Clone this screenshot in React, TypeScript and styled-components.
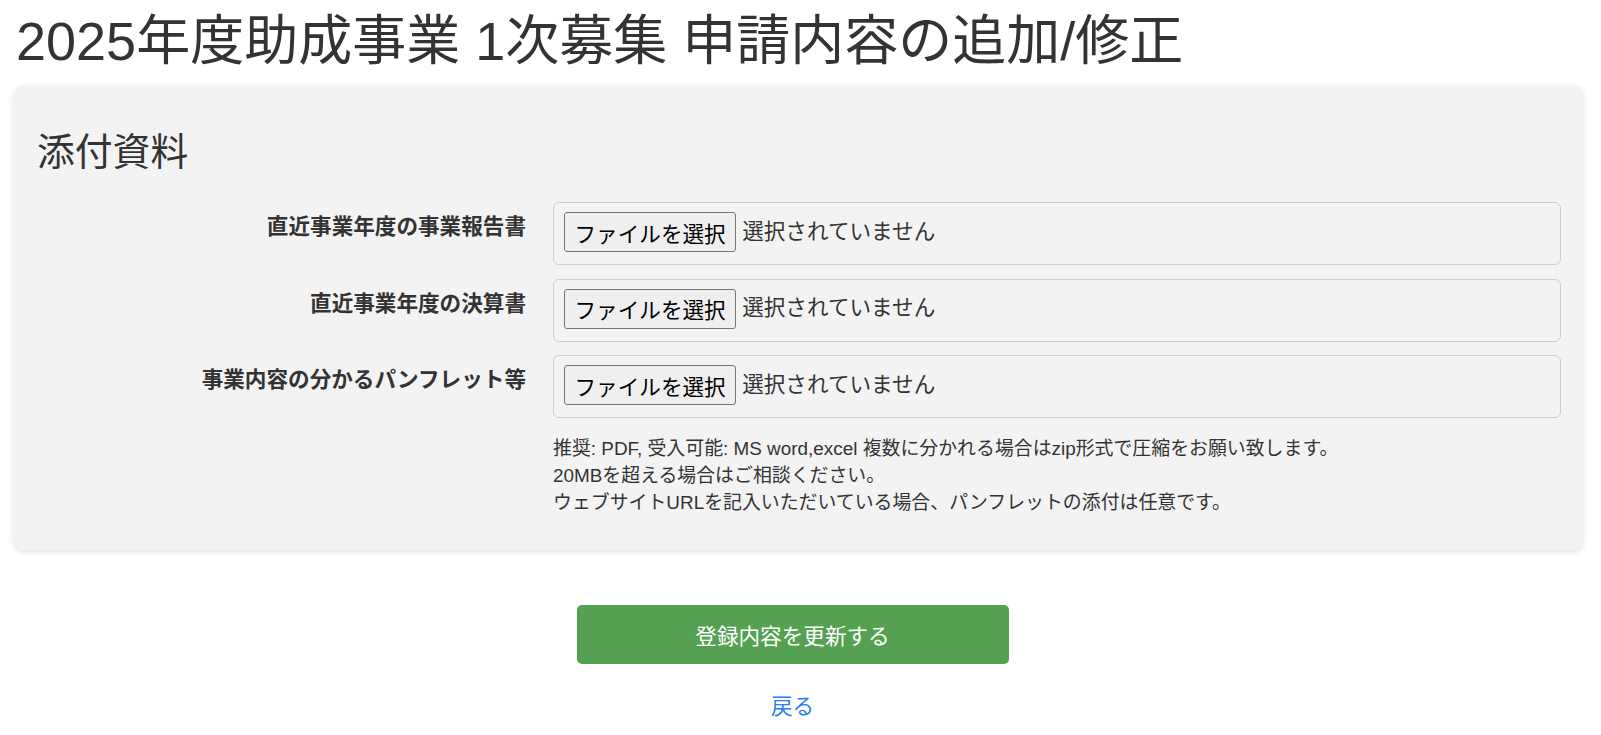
import styled, { createGlobalStyle } from "styled-components";

const GlobalStyle = createGlobalStyle`
  html, body {
    margin: 0;
    padding: 0;
    background: #ffffff;
  }
  body {
    font-family: "Liberation Sans", "Noto Sans CJK JP", sans-serif;
    font-size: 21.6px;
    line-height: 1.5;
    color: #333333;
  }
`;

const Page = styled.div`
  padding: 9px 18px 0 14px;
`;

const PageTitle = styled.h1`
  margin: 0 0 11px 2px;
  font-size: 54px;
  font-weight: 400;
  line-height: 1.2;
  color: #333333;
`;

const Card = styled.section`
  background: #f3f3f3;
  border-radius: 10px;
  box-shadow: 0 2px 6px rgba(0, 0, 0, 0.12);
  padding: 45px 22px 20px 23px;
`;

const SectionTitle = styled.h2`
  margin: 0 0 27px;
  font-size: 37.8px;
  font-weight: 400;
  line-height: 1.2;
  color: #333333;
`;

const FormRow = styled.div`
  display: grid;
  grid-template-columns: 489px 1fr;
  column-gap: 27px;
  margin-bottom: 13.5px;
`;

const Label = styled.label`
  padding-top: 9px;
  text-align: right;
  font-weight: 700;
  font-size: 21.6px;
  line-height: 1.5;
  color: #333333;
`;

const FileBox = styled.div`
  display: flex;
  align-items: center;
  gap: 6px;
  border: 1px solid #cccccc;
  border-radius: 6px;
  padding: 9px 10px 12px;
`;

const FileButton = styled.button`
  height: 40px;
  padding: 0 9.5px;
  border: 1px solid #767676;
  border-radius: 3px;
  background: #efefef;
  color: #000000;
  font-family: "Liberation Sans", "Noto Sans CJK JP", sans-serif;
  font-size: 21.6px;
`;

const FileStatus = styled.span`
  font-size: 21.6px;
  color: #333333;
`;

const HelpText = styled.p`
  grid-column: 2;
  margin: 3px 0 0;
  font-size: 18.9px;
  line-height: 1.45;
  color: #333333;
`;

const Actions = styled.div`
  display: flex;
  flex-direction: column;
  align-items: center;
  padding-top: 55px;
  padding-right: 12px;
`;

const SubmitButton = styled.button`
  width: 432px;
  height: 59px;
  border: none;
  border-radius: 5px;
  background: #55a152;
  color: #ffffff;
  font-family: "Liberation Sans", "Noto Sans CJK JP", sans-serif;
  font-size: 21.6px;
`;

const BackLink = styled.a`
  margin-top: 27px;
  color: #2b7de9;
  text-decoration: none;
  font-size: 21.6px;
`;

const fields = [
  "直近事業年度の事業報告書",
  "直近事業年度の決算書",
  "事業内容の分かるパンフレット等",
];

export default function App() {
  return (
    <>
      <GlobalStyle />
      <Page>
        <PageTitle>2025年度助成事業 1次募集 申請内容の追加/修正</PageTitle>
        <Card>
          <SectionTitle>添付資料</SectionTitle>
          {fields.map((label) => (
            <FormRow key={label}>
              <Label>{label}</Label>
              <FileBox>
                <FileButton type="button">ファイルを選択</FileButton>
                <FileStatus>選択されていません</FileStatus>
              </FileBox>
            </FormRow>
          ))}
          <FormRow>
            <HelpText>
              推奨: PDF, 受入可能: MS word,excel 複数に分かれる場合はzip形式で圧縮をお願い致します。
              <br />
              20MBを超える場合はご相談ください。
              <br />
              ウェブサイトURLを記入いただいている場合、パンフレットの添付は任意です。
            </HelpText>
          </FormRow>
        </Card>
        <Actions>
          <SubmitButton type="button">登録内容を更新する</SubmitButton>
          <BackLink href="#">戻る</BackLink>
        </Actions>
      </Page>
    </>
  );
}
